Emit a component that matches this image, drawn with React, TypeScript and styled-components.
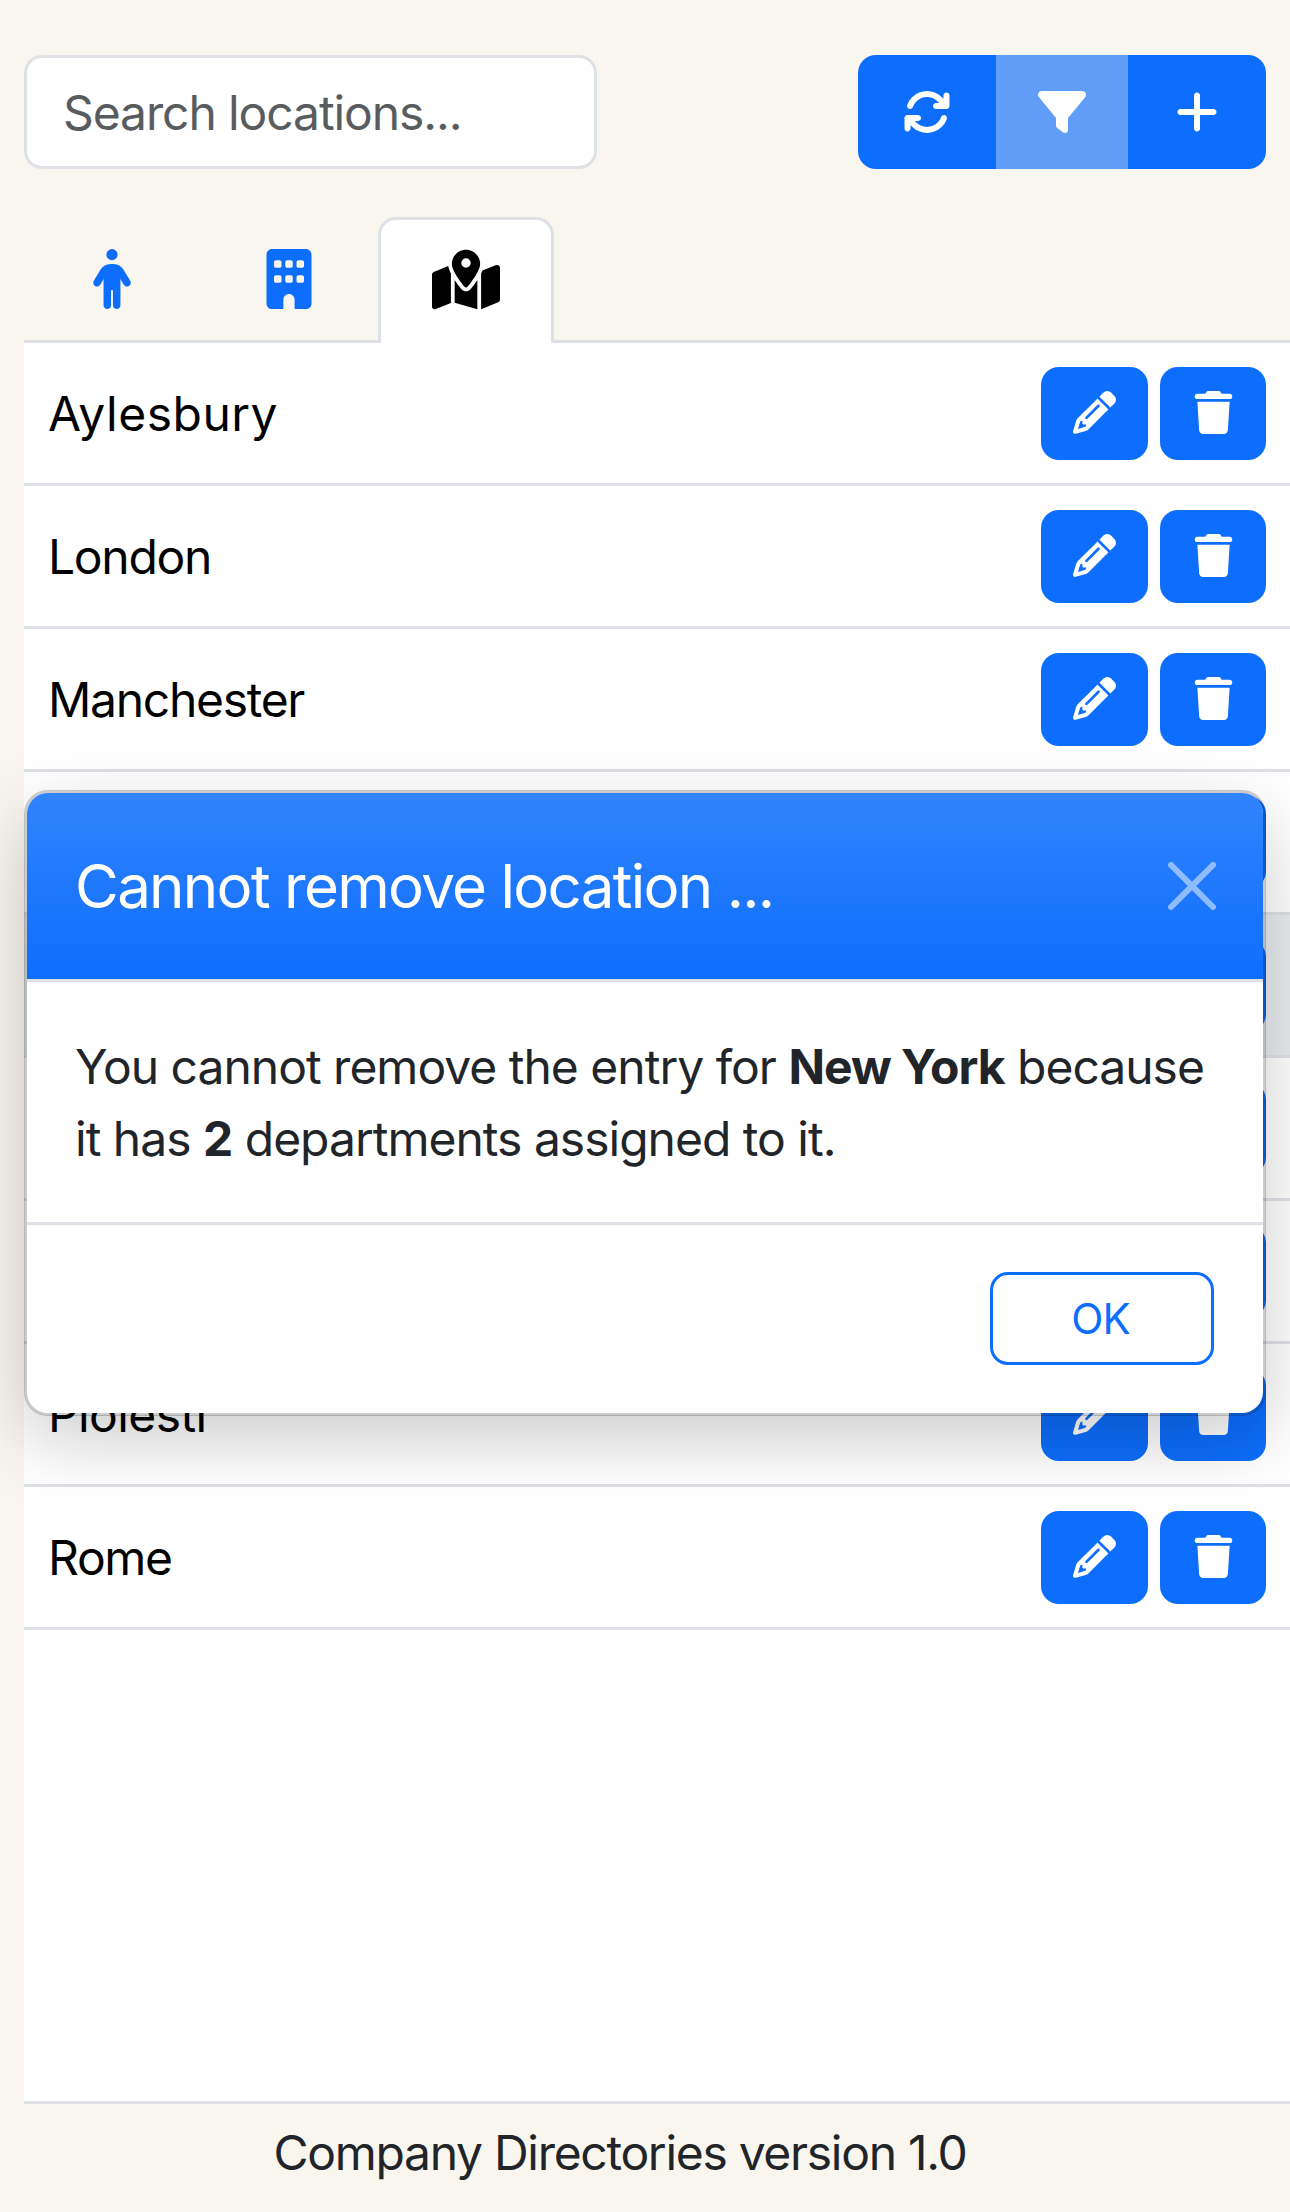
import React from 'react';
import styled, { createGlobalStyle } from 'styled-components';
import {
  FaArrowsRotate,
  FaBuilding,
  FaFilter,
  FaMapLocationDot,
  FaPencil,
  FaPerson,
  FaPlus,
  FaTrash,
} from 'react-icons/fa6';

// Only the names that can be read in the picture: the others sit behind the dialog.
const locations = [
  { id: 1, name: 'Aylesbury', spacing: 0.5 },
  { id: 2, name: 'London' },
  { id: 3, name: 'Manchester' },
  { id: 4, name: '' },
  { id: 5, name: 'New York', selected: true },
  { id: 6, name: '' },
  { id: 7, name: '' },
  { id: 8, name: 'Ploiesti', spacing: -0.6 },
  { id: 9, name: 'Rome' },
];

export default function App() {
  return (
    <Root>
      <GlobalStyle />
      <TopBar>
        <SearchInput placeholder="Search locations..." />
        <ButtonGroup>
          <GroupButton $width={138}><FaArrowsRotate size={48} /></GroupButton>
          <GroupButton $width={132} $active><FaFilter size={48} /></GroupButton>
          <GroupButton $width={138}><FaPlus size={48} /></GroupButton>
        </ButtonGroup>
      </TopBar>

      <Tabs>
        <Tab><FaPerson size={60} /></Tab>
        <Tab><FaBuilding size={60} /></Tab>
        <Tab $active><FaMapLocationDot size={68} /></Tab>
      </Tabs>

      <Content>
        {locations.map((location) => (
          <Row key={location.id} $selected={location.selected}>
            <RowName $spacing={location.spacing ?? -1.3}>{location.name}</RowName>
            <RowActions>
              <RowButton $width={107}><FaPencil size={43} /></RowButton>
              <RowButton $width={106}><FaTrash size={43} /></RowButton>
            </RowActions>
          </Row>
        ))}
      </Content>

      <Footer>Company Directories version 1.0</Footer>

      <Modal>
        <ModalHeader>
          <ModalTitle>Cannot remove location ...</ModalTitle>
          <CloseIcon viewBox="0 0 16 16">
            <path d="M.293.293a1 1 0 0 1 1.414 0L8 6.586 14.293.293a1 1 0 1 1 1.414 1.414L9.414 8l6.293 6.293a1 1 0 0 1-1.414 1.414L8 9.414l-6.293 6.293a1 1 0 0 1-1.414-1.414L6.586 8 .293 1.707a1 1 0 0 1 0-1.414z" />
          </CloseIcon>
        </ModalHeader>
        <ModalBody>
          You cannot remove the entry for <strong>New York</strong> because it has{' '}
          <strong>2</strong> departments assigned to it.
        </ModalBody>
        <ModalFooter>
          <OkButton>OK</OkButton>
        </ModalFooter>
      </Modal>
    </Root>
  );
}

const GlobalStyle = createGlobalStyle`
  html, body {
    margin: 0;
    padding: 0;
    background: #f9f6ef;
  }
  * {
    box-sizing: border-box;
  }
`;

const Root = styled.div`
  position: relative;
  display: flex;
  flex-direction: column;
  height: 2212px;
  overflow: hidden;
  background: #f9f6ef;
  color: #212529;
  font-family: Inter, "Liberation Sans", sans-serif;
  font-size: 48px;
  letter-spacing: -1px;
`;

const TopBar = styled.div`
  display: flex;
  justify-content: space-between;
  padding: 55px 24px 0;
`;

const SearchInput = styled.input`
  width: 573px;
  height: 114px;
  padding: 0 36px;
  border: 3px solid #dee2e6;
  border-radius: 18px;
  background: #fff;
  font: inherit;
  letter-spacing: -1.1px;
  color: #212529;
  outline: none;

  &::placeholder {
    color: #595c5f;
    opacity: 1;
  }
`;

const ButtonGroup = styled.div`
  display: flex;
  height: 114px;
  border-radius: 18px;
  overflow: hidden;
`;

const GroupButton = styled.button<{ $width: number; $active?: boolean }>`
  display: flex;
  align-items: center;
  justify-content: center;
  width: ${(p) => p.$width}px;
  padding: 0;
  border: 0;
  background: ${(p) => (p.$active ? '#5f9df8' : '#0d6efd')};
  color: #fff;
`;

const Tabs = styled.div`
  display: flex;
  gap: 1px;
  height: 126px;
  margin: 48px 0 0 24px;
  border-bottom: 3px solid #dee2e6;
`;

const Tab = styled.div<{ $active?: boolean }>`
  display: flex;
  justify-content: center;
  width: 176px;
  height: 126px;
  padding-top: ${(p) => (p.$active ? 26 : 29)}px;
  border: 3px solid ${(p) => (p.$active ? '#dee2e6' : 'transparent')};
  border-bottom: 0;
  border-radius: 18px 18px 0 0;
  background: ${(p) => (p.$active ? '#fff' : 'transparent')};
  color: ${(p) => (p.$active ? '#000' : '#0d6efd')};
`;

const Content = styled.div`
  flex: 1;
  margin-left: 24px;
  background: #fff;
  border-bottom: 3px solid #dee2e6;
`;

const Row = styled.div<{ $selected?: boolean }>`
  display: flex;
  align-items: center;
  justify-content: space-between;
  height: 143px;
  padding: 24px 24px 23px;
  border-bottom: 3px solid #dee2e6;
  background: ${(p) => (p.$selected ? '#e9ecef' : '#fff')};
  color: #000;
`;

const RowName = styled.span<{ $spacing: number }>`
  letter-spacing: ${(p) => p.$spacing}px;
`;

const RowActions = styled.div`
  display: flex;
  gap: 12px;
`;

const RowButton = styled.button<{ $width: number }>`
  display: flex;
  align-items: center;
  justify-content: center;
  width: ${(p) => p.$width}px;
  height: 93px;
  padding: 0 0 3px;
  border: 0;
  border-radius: 18px;
  background: #0d6efd;
  color: #fff;
`;

const Footer = styled.div`
  display: flex;
  align-items: center;
  justify-content: center;
  height: 108px;
  padding: 0 50px 12px 0;
  letter-spacing: -1.3px;
`;

const Modal = styled.div`
  position: absolute;
  top: 790px;
  left: 24px;
  width: 1242px;
  border: 3px solid rgba(0, 0, 0, 0.2);
  border-radius: 24px;
  background: #fff;
  background-clip: padding-box;
  box-shadow: 0 24px 72px rgba(0, 0, 0, 0.2);
`;

const ModalHeader = styled.div`
  display: flex;
  align-items: center;
  justify-content: space-between;
  height: 189px;
  padding: 0 47px 0 48px;
  border-bottom: 3px solid #dee2e6;
  border-radius: 21px 21px 0 0;
  background: #0d6efd linear-gradient(180deg, rgba(255, 255, 255, 0.15), rgba(255, 255, 255, 0));
  color: #fff;
`;

const ModalTitle = styled.div`
  font-size: 60px;
  letter-spacing: -1.7px;
`;

const CloseIcon = styled.svg`
  width: 48px;
  height: 48px;
  fill: #fff;
  opacity: 0.5;
`;

const ModalBody = styled.div`
  padding: 49px 48px 47px;
  border-bottom: 3px solid #dee2e6;
  line-height: 72px;
`;

const ModalFooter = styled.div`
  display: flex;
  justify-content: flex-end;
  padding: 47px 49px 48px 48px;
`;

const OkButton = styled.button`
  width: 224px;
  height: 93px;
  padding: 0 3px 0 0;
  border: 3px solid #0d6efd;
  border-radius: 18px;
  background: transparent;
  color: #0d6efd;
  font: inherit;
  font-size: 42px;
  letter-spacing: -0.8px;
`;
